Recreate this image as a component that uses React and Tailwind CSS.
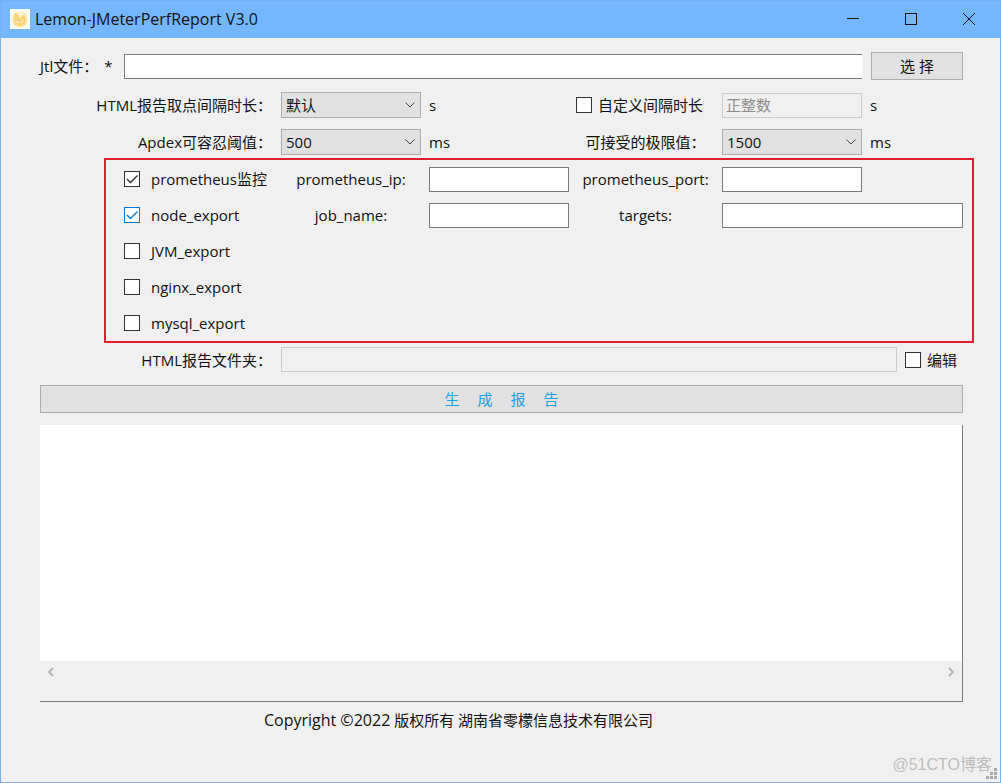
import { useState } from "react";

const rowGrid =
  "grid grid-cols-[84fr_157fr_148fr_140fr_153fr_140fr_101fr] items-center";

function LemonIcon() {
  return (
    <svg viewBox="0 0 20 20" className="size-5" aria-hidden="true">
      <rect width="20" height="20" fill="#fdfaf0" />
      <circle cx="10" cy="10.500" r="8" fill="#fbe9b8" />
      <path d="M5 3.500 8 5l1.500 3L13 5l3 4-1 6-5 2.500-5-2L3.500 10z" fill="#f8d57a" />
      <path d="M9.500 2.500 10 8l4-4M5 12.500l4 1M13 11l-2 3" stroke="#fdf6dc" strokeWidth="1.200" fill="none" />
    </svg>
  );
}

function TitleBar() {
  const button = "flex h-full w-[58px] items-center justify-center";
  return (
    <header className="flex h-[37px] items-center bg-[#75b7ff] pr-0.5 pb-0.5 pl-[9px]">
      <LemonIcon />
      <h1 className="ml-[5px] flex-1 text-base leading-6">Lemon-JMeterPerfReport V3.0</h1>
      <button type="button" aria-label="Minimize" className={button}>
        <svg viewBox="0 0 12 12" className="size-3">
          <path d="M0 5.500h12" stroke="#111" />
        </svg>
      </button>
      <button type="button" aria-label="Maximize" className={button}>
        <svg viewBox="0 0 12 12" className="size-3">
          <rect x="0.500" y="0.500" width="11" height="11" fill="none" stroke="#111" />
        </svg>
      </button>
      <button type="button" aria-label="Close" className={button}>
        <svg viewBox="0 0 12 12" className="size-3">
          <path d="M0 0l12 12M12 0L0 12" stroke="#111" />
        </svg>
      </button>
    </header>
  );
}

function TextField({ className = "", ...props }) {
  return (
    <input
      type="text"
      className={`h-[25px] w-full min-w-0 border border-[#7a7a7a] bg-white px-[3px] outline-none disabled:border-[#cccccc] disabled:bg-[#f0f0f0] ${className}`}
      {...props}
    />
  );
}

function SelectField({ id, options }) {
  return (
    <div className="relative min-w-0">
      <select
        id={id}
        className="block h-[26px] w-full appearance-none border border-[#adadad] bg-[#e1e1e1] pr-6 pl-1 outline-none"
      >
        {options.map((option) => (
          <option key={option}>{option}</option>
        ))}
      </select>
      <svg viewBox="0 0 10 6" className="pointer-events-none absolute top-[10px] right-[6px] h-1.5 w-2.5">
        <path d="M0.500 0.500 5 5 9.500 0.500" fill="none" stroke="#444" />
      </svg>
    </div>
  );
}

function CheckField({ label, focused = false, defaultChecked = false, gap = "gap-[6px]" }) {
  const [checked, setChecked] = useState(defaultChecked);
  const border = focused ? "border-[#0078d7]" : "border-[#333333]";
  return (
    <label className={`flex items-center whitespace-nowrap ${gap}`}>
      <span className="relative flex size-4 shrink-0">
        <input
          type="checkbox"
          checked={checked}
          onChange={(e) => setChecked(e.target.checked)}
          className={`size-4 appearance-none border bg-white ${border}`}
        />
        {checked && (
          <svg viewBox="0 0 16 16" className="pointer-events-none absolute inset-0 size-4">
            <path d="M3 8 6.500 11.500 13.500 4.500" fill="none" stroke={focused ? "#0078d7" : "#333333"} strokeWidth="1.400" />
          </svg>
        )}
      </span>
      {label}
    </label>
  );
}

function MonitorPanel() {
  return (
    <section className="relative mt-[6px]">
      <div className={`${rowGrid} h-9`}>
        <div className="col-start-2">
          <CheckField label="prometheus监控" defaultChecked gap="gap-[11px]" />
        </div>
        <label htmlFor="prometheus-ip" className="pr-2 text-center">prometheus_ip:</label>
        <TextField id="prometheus-ip" />
        <label htmlFor="prometheus-port" className="text-center">prometheus_port:</label>
        <TextField id="prometheus-port" />
      </div>
      <div className={`${rowGrid} h-9`}>
        <div className="col-start-2">
          <CheckField label="node_export" defaultChecked focused gap="gap-[11px]" />
        </div>
        <label htmlFor="job-name" className="pr-2 text-center">job_name:</label>
        <TextField id="job-name" />
        <label htmlFor="targets" className="text-center">targets:</label>
        <div className="col-span-2 flex">
          <TextField id="targets" />
        </div>
      </div>
      {["JVM_export", "nginx_export", "mysql_export"].map((name) => (
        <div key={name} className={`${rowGrid} h-9`}>
          <div className="col-start-2">
            <CheckField label={name} gap="gap-[11px]" />
          </div>
        </div>
      ))}
      {/* red highlight around the exporter settings */}
      <div className="pointer-events-none absolute -top-[3px] -right-[11px] -bottom-0.5 left-16 border-2 border-[#e0202c]" />
    </section>
  );
}

function LogArea() {
  return (
    <div className="mt-3 flex flex-1 flex-col border-r border-b border-[#7a7a7a]">
      <textarea aria-label="日志" className="min-h-[120px] w-full flex-1 resize-none bg-white p-1 outline-none" />
      <div className="flex h-10 items-start justify-between px-[7px] pt-[6px] text-[#b4b4b4]">
        <button type="button" aria-label="Scroll left">
          <svg viewBox="0 0 7 10" className="h-2.5 w-[7px]">
            <path d="M6 1 2 5l4 4" fill="none" stroke="currentColor" strokeWidth="2" />
          </svg>
        </button>
        <button type="button" aria-label="Scroll right">
          <svg viewBox="0 0 7 10" className="h-2.5 w-[7px]">
            <path d="M1 1l4 4-4 4" fill="none" stroke="currentColor" strokeWidth="2" />
          </svg>
        </button>
      </div>
    </div>
  );
}

export default function App() {
  return (
    <div className="relative flex min-h-screen flex-col border border-[#75b0ee] bg-[#f0f0f0] font-['Open_Sans','Noto_Sans_CJK_SC',sans-serif] text-[15px] leading-6 text-[#111111]">
      <TitleBar />
      <main className="flex flex-1 flex-col pt-[14px] pr-[37px] pl-[39px]">
        <div className={`${rowGrid} h-[27px]`}>
          <label htmlFor="jtl-file" className="whitespace-nowrap">
            Jtl文件：<span className="ml-1.5">*</span>
          </label>
          <div className="col-span-5 flex">
            <TextField id="jtl-file" className="border-r-0" />
          </div>
          <button type="button" className="ml-[9px] h-7 border border-[#adadad] bg-[#e1e1e1]">
            选 择
          </button>
        </div>

        <div className={`${rowGrid} mt-[13px]`}>
          <label htmlFor="interval" className="col-span-2 pr-[9px] text-right">HTML报告取点间隔时长：</label>
          <div className="mr-2">
            <SelectField id="interval" options={["默认", "1", "5", "10"]} />
          </div>
          <span>s</span>
          <div className="pl-[7px]">
            <CheckField label="自定义间隔时长" />
          </div>
          <TextField aria-label="自定义间隔时长" placeholder="正整数" disabled className="placeholder:text-[#8c8c8c]" />
          <span className="pl-2">s</span>
        </div>

        <div className={`${rowGrid} mt-[11px]`}>
          <label htmlFor="apdex" className="col-span-2 pr-[9px] text-right">Apdex可容忍阈值：</label>
          <div className="mr-2">
            <SelectField id="apdex" options={["500", "1000", "1500"]} />
          </div>
          <span>ms</span>
          <label htmlFor="limit" className="text-center">可接受的极限值：</label>
          <SelectField id="limit" options={["1500", "2000", "3000"]} />
          <span className="pl-2">ms</span>
        </div>

        <MonitorPanel />

        <div className={`${rowGrid} mt-[6px]`}>
          <label htmlFor="report-dir" className="col-span-2 pr-[9px] text-right">HTML报告文件夹：</label>
          <div className="col-span-5 flex items-center gap-2 pr-[6px]">
            <TextField id="report-dir" disabled />
            <CheckField label="编辑" />
          </div>
        </div>

        <button type="button" className="mt-[13px] h-7 border border-[#adadad] bg-[#e1e1e1] text-[#1a9fe0]">
          <span className="flex justify-center gap-[18px]">
            <span>生</span>
            <span>成</span>
            <span>报</span>
            <span>告</span>
          </span>
        </button>

        <LogArea />
      </main>

      <footer className="mt-[6px] pr-[84px] pb-[50px] text-center">
        <span className="text-base leading-6">Copyright ©2022</span> 版权所有 湖南省零檬信息技术有限公司
      </footer>

      <span className="absolute right-2 bottom-[5px] font-['Liberation_Sans','Noto_Sans_CJK_SC',sans-serif] text-base text-[#bdbdbd]">
        @51CTO博客
      </span>
      <svg viewBox="0 0 12 12" className="absolute right-0.5 bottom-0.5 size-3" fill="#a8a8a8">
        <path d="M8 0h3v3H8zM4 4h3v3H4zM8 4h3v3H8zM0 8h3v3H0zM4 8h3v3H4zM8 8h3v3H8z" />
      </svg>
    </div>
  );
}
